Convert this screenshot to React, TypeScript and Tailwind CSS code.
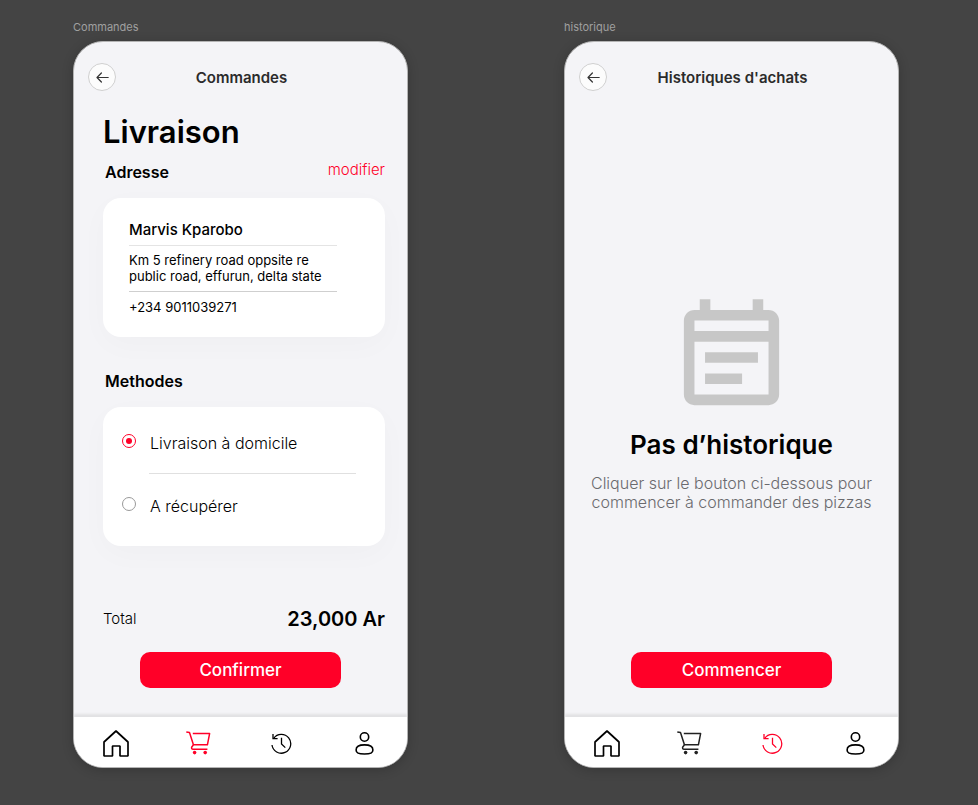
import type { ReactNode } from "react";

type Tab = "cart" | "history";

function HomeIcon() {
  return (
    <svg width="26" height="27" viewBox="0 0 26 27" fill="none" stroke="currentColor" strokeWidth="1.7" strokeLinejoin="bevel">
      <path d="M1 26V12L13 1L25 12V26H17V16H9.5V26Z" />
    </svg>
  );
}

function CartIcon() {
  return (
    <svg width="25" height="24" viewBox="0 0 25 24" fill="none" stroke="currentColor" strokeWidth="1.5" strokeLinejoin="round">
      <path d="M0.3 0.9L3.5 1.4L7.5 13.9" />
      <path d="M6.8 2.6H23.6L21.4 13.8H7.5L5.6 16.3Q5.4 18.2 7 18.2H21.4" />
      <circle cx="8.6" cy="21.6" r="1.8" fill="currentColor" stroke="none" />
      <circle cx="19.2" cy="21.6" r="1.8" fill="currentColor" stroke="none" />
    </svg>
  );
}

function HistoryIcon() {
  return (
    <svg width="21" height="21" viewBox="0 0 21 21" fill="none" stroke="currentColor" strokeWidth="1.3">
      <path d="M1 12A9.4 9.4 0 1 0 2.7 5.3" />
      <path d="M2 0.9V5.7H6.6" />
      <path d="M10.5 4.8V11L14.3 14.6" />
    </svg>
  );
}

function UserIcon() {
  return (
    <svg width="19" height="23" viewBox="0 0 19 23" fill="none" stroke="currentColor" strokeWidth="1.6">
      <circle cx="9.5" cy="5" r="4.2" />
      <path d="M9.5 12.9C14.6 12.9 17.9 14.9 17.9 17.9C17.9 21.1 15.6 22 9.5 22C3.4 22 1.1 21.1 1.1 17.9C1.1 14.9 4.4 12.9 9.5 12.9Z" />
    </svg>
  );
}

function BackIcon() {
  return (
    <svg width="13" height="11" viewBox="0 0 13 11" fill="none" stroke="currentColor" strokeWidth="1.2" strokeLinecap="round" strokeLinejoin="round">
      <path d="M12.2 5.5H1M5.4 1L1 5.5L5.4 10" />
    </svg>
  );
}

function CalendarIcon() {
  return (
    <svg width="127" height="127" viewBox="0 0 24 24" fill="#c7c7c7" aria-hidden="true">
      <path
        fillRule="evenodd"
        d="M6 1H8V3H16V1H18V3H19C20.1 3 21 3.9 21 5V19C21 20.1 20.1 21 19 21H5C3.9 21 3 20.1 3 19V5C3 3.9 3.9 3 5 3H6ZM5 5V7H19V5ZM5 9V19H19V9ZM7 11H17V13H7ZM7 15H14V17H7Z"
      />
    </svg>
  );
}

function NavBar({ active }: { active: Tab }) {
  const link = "flex h-full items-center justify-center";
  return (
    <nav className="grid h-[50px] grid-cols-4 items-center bg-white pt-[2px] pr-px text-black shadow-[0_-3px_2px_#e2e2e4]">
      <a href="#accueil" aria-label="Accueil" className={link}>
        <HomeIcon />
      </a>
      <a href="#panier" aria-label="Panier" className={active === "cart" ? `${link} text-[#ff0028]` : `${link} text-[#222]`}>
        <CartIcon />
      </a>
      <a href="#historique" aria-label="Historique" className={active === "history" ? `${link} text-[#ff0028]` : link}>
        <HistoryIcon />
      </a>
      <a href="#profil" aria-label="Profil" className={link}>
        <UserIcon />
      </a>
    </nav>
  );
}

function Phone({ name, title, active, children }: { name: string; title: string; active: Tab; children: ReactNode }) {
  return (
    <section className="flex min-w-0 flex-col">
      <p className="mb-[6px] text-[11px] leading-4 text-[#a0a0a0]">{name}</p>
      <div className="flex min-h-[727px] flex-col overflow-hidden rounded-[30px] border border-[#b4b4b4] bg-[#f4f4f7] shadow-[0_2px_12px_rgba(0,0,0,0.2)]">
        <header className="grid grid-cols-[28px_1fr_28px] items-center px-[14px] pt-[21px]">
          <button type="button" aria-label="Retour" className="flex size-7 items-center justify-center rounded-full border border-[#cfcfcf] bg-[#fcfcfc] text-[#333]">
            <BackIcon />
          </button>
          <h2 className="pt-[2px] pl-[2px] text-center text-[15px] leading-6 font-semibold text-[#2b2b2b]">{title}</h2>
        </header>
        <div className="flex flex-1 flex-col">{children}</div>
        <NavBar active={active} />
      </div>
    </section>
  );
}

function Action({ children }: { children: ReactNode }) {
  return (
    <div className="mt-auto flex justify-center pb-[29px]">
      <button type="button" className="h-9 w-[201px] rounded-[10px] bg-[#ff0028] text-[17px] leading-6 font-medium text-white">
        {children}
      </button>
    </div>
  );
}

const card = "mt-[14px] rounded-[18px] bg-white shadow-[0_8px_30px_rgba(0,0,0,0.025)]";
const radio =
  "mt-[3px] grid size-[14px] shrink-0 appearance-none place-content-center rounded-full border border-[#999] checked:border-[#ff0028] checked:before:size-[6px] checked:before:rounded-full checked:before:bg-[#ff0028] checked:before:content-['']";

export default function App() {
  return (
    <main className="grid min-h-screen grid-cols-2 items-start gap-x-[156px] bg-[#444] pt-[19px] pr-[79px] pb-8 pl-[73px] font-['Inter',sans-serif] text-black">
      <Phone name="Commandes" title="Commandes" active="cart">
        <div className="flex flex-col pr-[22px] pl-[29px]">
          <h1 className="mt-[21px] text-[31px] leading-10 font-semibold">Livraison</h1>
          <div className="mt-2 flex items-start justify-between pl-[2px]">
            <h3 className="text-base leading-6 font-semibold">Adresse</h3>
            <a href="#modifier" className="text-[15px] leading-5 font-light text-[#ff0028]">
              modifier
            </a>
          </div>
          <div className={`${card} pt-5 pr-[48px] pb-[22px] pl-[26px]`}>
            <p className="border-b border-[#e4e4e4] pb-[3px] text-[15px] leading-6 font-medium">Marvis Kparobo</p>
            <p className="border-b border-[#cfcfcf] pt-[6px] pb-[7px] text-[13px] leading-4">
              Km 5 refinery road oppsite re
              <br />
              public road, effurun, delta state
            </p>
            <p className="pt-[7px] text-[13px] leading-4">+234 9011039271</p>
          </div>

          <h3 id="methodes" className="mt-8 pl-[2px] text-base leading-6 font-semibold">
            Methodes
          </h3>
          <div role="radiogroup" aria-labelledby="methodes" className={`${card} pt-6 pr-[29px] pb-7 pl-[19px]`}>
            <label className="flex gap-[14px] text-base leading-6 font-light">
              <input type="radio" name="methode" defaultChecked className={radio} />
              Livraison à domicile
            </label>
            <hr className="mt-[18px] ml-[27px] border-[#e0e0e0]" />
            <label className="mt-5 flex gap-[14px] text-base leading-6 font-light">
              <input type="radio" name="methode" className={radio} />
              A récupérer
            </label>
          </div>

          <div className="mt-[61px] mb-[21px] flex items-center justify-between">
            <span className="text-[15px] leading-6 font-light">Total</span>
            <span className="text-xl leading-6 font-semibold">23,000 Ar</span>
          </div>
        </div>
        <Action>Confirmer</Action>
      </Phone>

      <Phone name="historique" title="Historiques d'achats" active="history">
        <div className="mt-[203px] flex flex-col items-center text-center">
          <CalendarIcon />
          <h1 className="mt-2 text-[26px] leading-8 font-semibold">Pas d’historique</h1>
          <p className="mt-[13px] text-base leading-[19px] font-light text-[#6a6a6e]">
            Cliquer sur le bouton ci-dessous pour
            <br />
            commencer à commander des pizzas
          </p>
        </div>
        <Action>Commencer</Action>
      </Phone>
    </main>
  );
}
